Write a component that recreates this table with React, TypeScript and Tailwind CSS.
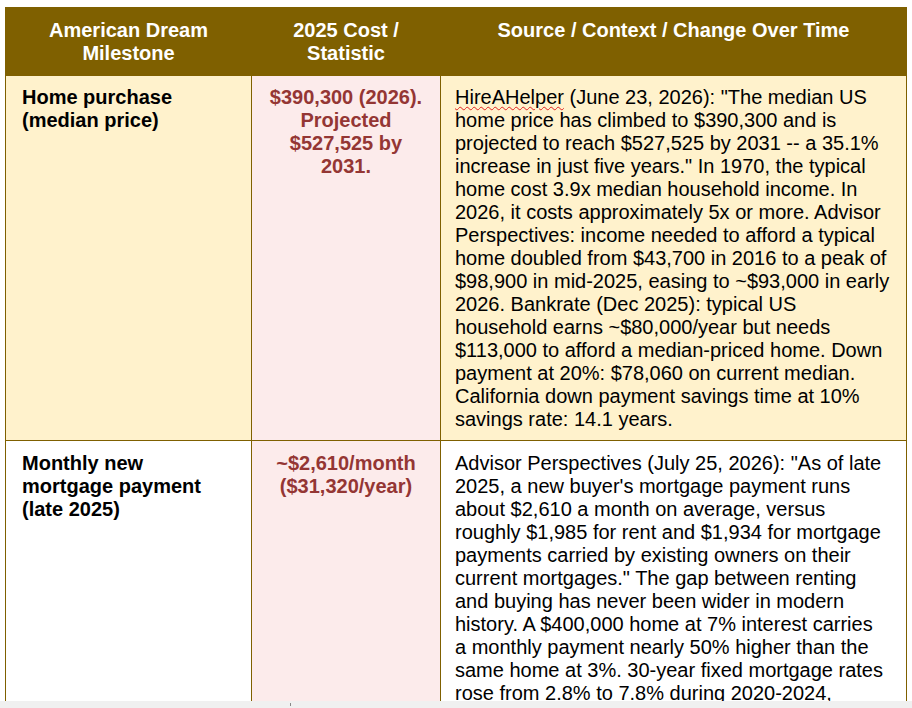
import React from "react";

const font = { fontFamily: '"Liberation Sans", Arial, sans-serif' };

function Lines({ lines }: { lines: React.ReactNode[] }) {
  return (
    <>
      {lines.map((l, i) => (
        <React.Fragment key={i}>
          {l}
          {i < lines.length - 1 && <br />}
        </React.Fragment>
      ))}
    </>
  );
}

export default function App() {
  return (
    <div className="w-[912px] h-[708px] overflow-hidden bg-white flex flex-col" style={font}>
      <div className="h-[701px] overflow-hidden pl-[5px] pt-[7px]">
        <table className="table-fixed border-collapse w-[901px] text-[20px] leading-[23px] text-black">
          <colgroup>
            <col className="w-[246px]" />
            <col className="w-[189px]" />
            <col className="w-[466px]" />
          </colgroup>
          <thead>
            <tr className="bg-[#7f6000] text-white font-bold h-[68px]">
              <th className="border border-[#7f6000] align-top text-center px-[8px] pt-[11px] pb-[10px] whitespace-nowrap">
                <Lines lines={["American Dream", "Milestone"]} />
              </th>
              <th className="border border-[#7f6000] align-top text-center px-[8px] pt-[11px] pb-[10px] whitespace-nowrap">
                <Lines lines={["2025 Cost /", "Statistic"]} />
              </th>
              <th className="border border-[#7f6000] align-top text-center px-[8px] pt-[11px] pb-[10px] whitespace-nowrap">
                Source / Context / Change Over Time
              </th>
            </tr>
          </thead>
          <tbody>
            <tr>
              <td className="border border-[#7f6000] bg-[#fff2cc] align-top font-bold pl-[16px] pr-[4px] pt-[10px] pb-[9px] whitespace-nowrap">
                <Lines lines={["Home purchase", "(median price)"]} />
              </td>
              <td className="border border-[#7f6000] bg-[#fcebeb] align-top font-bold text-center text-[#943634] px-[4px] pt-[10px] pb-[9px] whitespace-nowrap">
                <Lines lines={["$390,300 (2026).", "Projected", "$527,525 by", "2031."]} />
              </td>
              <td className="border border-[#7f6000] bg-[#fff2cc] align-top pl-[14px] pr-[4px] pt-[10px] pb-[9px] whitespace-nowrap">
                <Lines
                  lines={[
                    <>
                      <span className="underline decoration-wavy decoration-[#e02020] decoration-1 underline-offset-[2px]">HireAHelper</span>{" "}
                      (June 23, 2026): "The median US
                    </>,
                    "home price has climbed to $390,300 and is",
                    "projected to reach $527,525 by 2031 -- a 35.1%",
                    "increase in just five years.\" In 1970, the typical",
                    "home cost 3.9x median household income. In",
                    "2026, it costs approximately 5x or more. Advisor",
                    "Perspectives: income needed to afford a typical",
                    "home doubled from $43,700 in 2016 to a peak of",
                    "$98,900 in mid-2025, easing to ~$93,000 in early",
                    "2026. Bankrate (Dec 2025): typical US",
                    "household earns ~$80,000/year but needs",
                    "$113,000 to afford a median-priced home. Down",
                    "payment at 20%: $78,060 on current median.",
                    "California down payment savings time at 10%",
                    "savings rate: 14.1 years.",
                  ]}
                />
              </td>
            </tr>
            <tr>
              <td className="border border-[#7f6000] bg-white align-top font-bold pl-[16px] pr-[4px] pt-[11px] pb-[8px] whitespace-nowrap">
                <Lines lines={["Monthly new", "mortgage payment", "(late 2025)"]} />
              </td>
              <td className="border border-[#7f6000] bg-[#fcebeb] align-top font-bold text-center text-[#943634] px-[4px] pt-[11px] pb-[8px] whitespace-nowrap">
                <Lines lines={["~$2,610/month", "($31,320/year)"]} />
              </td>
              <td className="border border-[#7f6000] bg-white align-top pl-[14px] pr-[4px] pt-[11px] pb-[8px] whitespace-nowrap">
                <Lines
                  lines={[
                    "Advisor Perspectives (July 25, 2026): \"As of late",
                    "2025, a new buyer's mortgage payment runs",
                    "about $2,610 a month on average, versus",
                    "roughly $1,985 for rent and $1,934 for mortgage",
                    "payments carried by existing owners on their",
                    "current mortgages.\" The gap between renting",
                    "and buying has never been wider in modern",
                    "history. A $400,000 home at 7% interest carries",
                    "a monthly payment nearly 50% higher than the",
                    "same home at 3%. 30-year fixed mortgage rates",
                    "rose from 2.8% to 7.8% during 2020-2024,",
                    "adding hundreds of dollars to the typical",
                  ]}
                />
              </td>
            </tr>
          </tbody>
        </table>
      </div>
      <div className="h-[7px] bg-[#f0f0f0] relative">
        <div className="absolute left-[290px] top-[2px] w-[1px] h-[3px] bg-[#888888]" />
      </div>
    </div>
  );
}
